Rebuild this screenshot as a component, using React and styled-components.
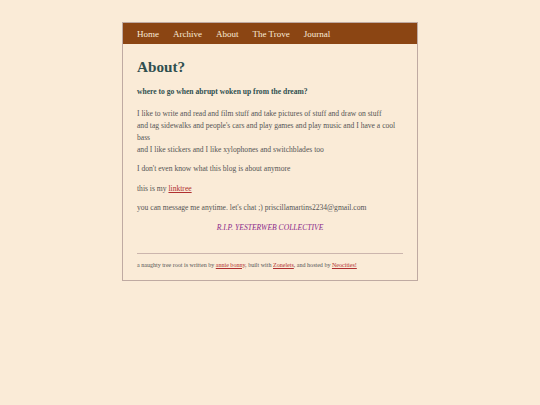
import React from "react";
import styled, { createGlobalStyle } from "styled-components";

const Global = createGlobalStyle`
  html, body { margin: 0; padding: 0; background: #faebd7; }
  body { font-family: "Liberation Serif", "Times New Roman", serif; }
`;

const Page = styled.div`
  padding-top: 22px;
  display: flex;
  justify-content: center;
`;

const Container = styled.div`
  width: 294px;
  border: 1px solid #bfaaa2;
  background: #faebd7;
`;

const Nav = styled.nav`
  background: #8b4513;
  height: 21px;
  display: flex;
  align-items: center;
  gap: 14px;
  padding: 0 14px;
`;

const NavLink = styled.a`
  color: #faebd7;
  font-size: 9px;
  text-decoration: none;
`;

const Content = styled.main`
  padding: 13px 14px 0;
  color: #555;
  font-size: 7.6px;
  line-height: 12px;
`;

const Title = styled.h1`
  margin: 0;
  font-size: 15.2px;
  line-height: 20px;
  color: #2f4f4f;
  font-weight: bold;
`;

const Sub = styled.h3`
  margin: 9px 0 0;
  font-size: 7.6px;
  line-height: 12px;
  color: #2f4f4f;
  font-weight: bold;
`;

const P = styled.p`
  margin: ${(p) => p.$top || 7.5}px 0 0;
`;

const Link = styled.a`
  color: #b03030;
  text-decoration: underline;
`;

const Rip = styled.p`
  margin: 8px 0 0;
  text-align: center;
  font-style: italic;
  color: #8b2a8b;
`;

const Rule = styled.hr`
  border: 0;
  border-top: 1px solid #cbb5ad;
  margin: 19px 0 0;
`;

const Footer = styled.footer`
  font-size: 6.05px;
  line-height: 9px;
  color: #555;
  padding: 6.5px 0 10.5px;
`;

export default function App() {
  return (
    <>
      <Global />
      <Page>
        <Container>
          <Nav>
            <NavLink href="#">Home</NavLink>
            <NavLink href="#">Archive</NavLink>
            <NavLink href="#">About</NavLink>
            <NavLink href="#">The Trove</NavLink>
            <NavLink href="#">Journal</NavLink>
          </Nav>
          <Content>
            <Title>About?</Title>
            <Sub>where to go when abrupt woken up from the dream?</Sub>
            <P $top={9.5}>
              I like to write and read and film stuff and take pictures of stuff and draw on stuff
              <br />
              and tag sidewalks and people's cars and play games and play music and I have a cool bass
              <br />
              and I like stickers and I like xylophones and switchblades too
            </P>
            <P>I don't even know what this blog is about anymore</P>
            <P>
              this is my <Link href="#">linktree</Link>
            </P>
            <P>you can message me anytime. let's chat ;) priscillamartins2234@gmail.com</P>
            <Rip>R.I.P. YESTERWEB COLLECTIVE</Rip>
            <Rule />
            <Footer>
              a naughty tree root is written by <Link href="#">annie bonny</Link>, built with{" "}
              <Link href="#">Zonelets</Link>, and hosted by <Link href="#">Neocities!</Link>
            </Footer>
          </Content>
        </Container>
      </Page>
    </>
  );
}
